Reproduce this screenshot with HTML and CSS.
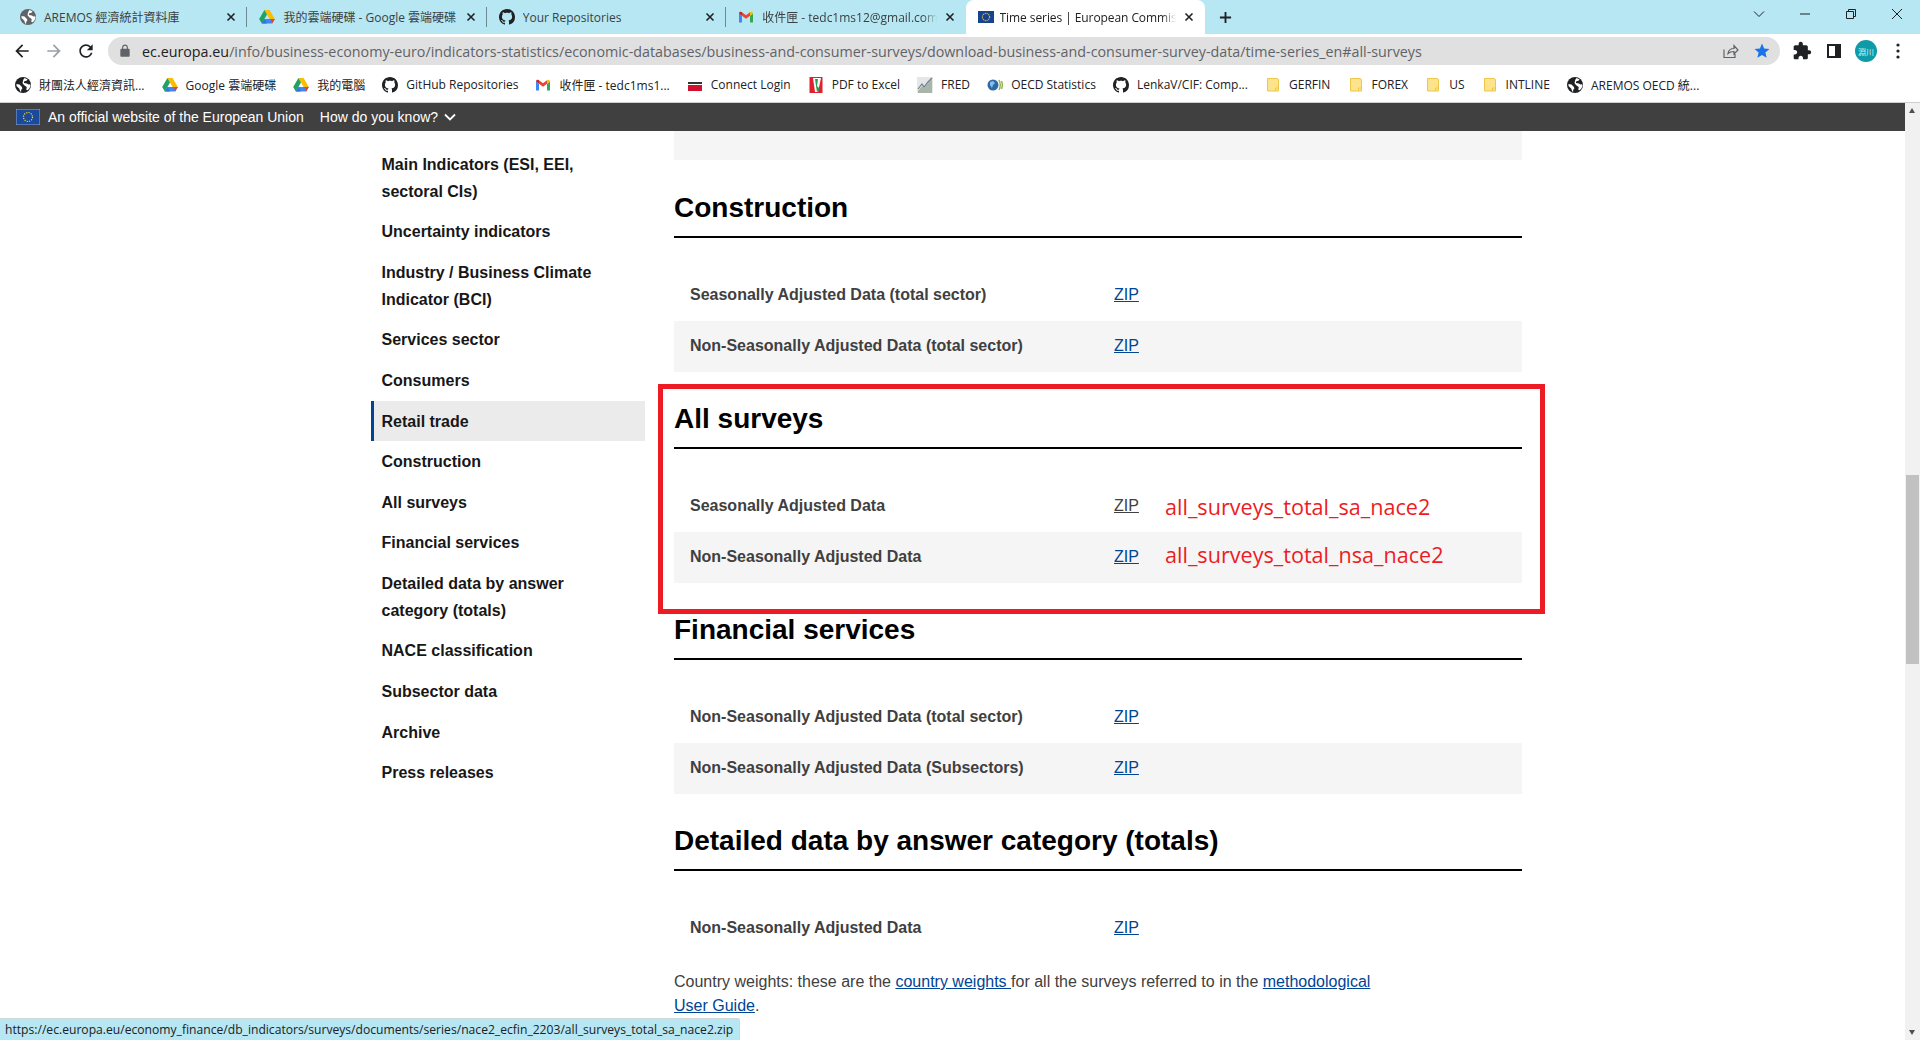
FILE: index.html
```html
<!DOCTYPE html>
<html lang="en">
<head>
<meta charset="utf-8">
<title>Time series | European Commission</title>
<link rel="stylesheet" href="styles.css">
</head>
<body>
<svg class="defs" aria-hidden="true">
  <symbol id="globe" viewBox="0 0 16 16"><circle cx="8" cy="8" r="8" fill="currentColor"/><path d="M1.500 7l3 .5 2.500 2.500.3 1.800-1 .8-.2 2.100-.9-.3-1-3-2.700-2.400zM9.500 1l3 1.200-1 1.600-2.200.5-.4 1.700 3 .4 1.500 1.200 1.800-.3.300 1.600-1.300 2.800-1.600 1.500-1.300-.3.400-3-2.800-1.800-1.400-2 .8-3.300z" fill="#fff"/></symbol>
  <symbol id="drive" viewBox="0 0 16 16"><path d="M5.400 1h5.200l5.200 9h-5.200z" fill="#fbbc04"/><path d="M5.400 1L.2 10l2.600 4.600L8 5.600z" fill="#1ea362"/><path d="M5.400 10h10.400l-2.600 4.600H2.800z" fill="#4285f4"/><path d="M5.400 10l-2.600 4.600h5.200z" fill="#3573d8"/><path d="M13.200 14.600l2.600-4.600h-4z" fill="#ea4335"/></symbol>
  <symbol id="github" viewBox="0 0 16 16"><path fill="currentColor" d="M8 0C3.580 0 0 3.580 0 8c0 3.540 2.290 6.530 5.470 7.590.4.070.55-.17.55-.38 0-.19-.01-.82-.01-1.490-2.010.37-2.530-.49-2.690-.94-.09-.23-.48-.94-.82-1.130-.28-.15-.68-.52-.01-.53.63-.01 1.080.58 1.230.82.72 1.210 1.870.87 2.330.66.07-.52.28-.87.51-1.070-1.780-.2-3.640-.89-3.640-3.950 0-.87.31-1.590.82-2.150-.08-.2-.36-1.020.08-2.120 0 0 .67-.21 2.200.82.64-.18 1.320-.27 2-.27s1.360.09 2 .27c1.530-1.040 2.200-.82 2.200-.82.44 1.100.16 1.920.08 2.120.51.56.82 1.270.82 2.150 0 3.070-1.870 3.750-3.650 3.950.29.25.54.73.54 1.480 0 1.070-.01 1.930-.01 2.200 0 .21.15.46.55.38A8.013 8.013 0 0016 8c0-4.420-3.580-8-8-8z"/></symbol>
  <symbol id="gmail" viewBox="0 0 16 16"><path d="M1 13.500V4.400l3 2.300v6.800z" fill="#4285f4"/><path d="M12 13.500V6.700l3-2.300v9.100z" fill="#34a853"/><path d="M4 6.700V3.200L8 6.300l4-3.100v3.500L8 9.800z" fill="#ea4335"/><path d="M1 4.400c0-1.600 1.800-2.300 3-1.200v3.500z" fill="#c5221f"/><path d="M15 4.400c0-1.600-1.800-2.300-3-1.200v3.500z" fill="#fbbc04"/></symbol>
  <symbol id="euflag" viewBox="0 0 16 16"><rect y="2" width="16" height="12" fill="#17428f"/><circle cx="8" cy="8" r="3.600" fill="none" stroke="#c7b93a" stroke-width="1.200" stroke-dasharray="1.200 .7"/></symbol>
  <symbol id="connect" viewBox="0 0 16 16"><rect x="1" y="5" width="14" height="2" fill="#333"/><rect x="1" y="8" width="14" height="6" fill="#d0102c"/></symbol>
  <symbol id="pdf" viewBox="0 0 16 16"><rect x="1.500" width="13" height="16" fill="#e0202c"/><path d="M5 1h8l-3 14H7z" fill="#fff"/><path d="M7 2l3 0-1 7 3 3-3 3-1-6z" fill="#2c9a50"/></symbol>
  <symbol id="fred" viewBox="0 0 16 16"><rect width="16" height="16" fill="#e4e6e8"/><path d="M1 14l4-5 2 2 4-5 4-4v14H1z" fill="#a9b5a8"/><path d="M1 12l4-5 2 3 4-5 4-4" fill="none" stroke="#6b7d8e" stroke-width="1.200"/></symbol>
  <symbol id="oecd" viewBox="0 0 16 16"><circle cx="6" cy="8" r="5.500" fill="#2b6aa8"/><path d="M3 5l3-1 2 2-2 2-1 3-2-3z" fill="#8fbde0"/><path d="M12 3c1.500 3 1.500 7 0 10M14.500 4c1 2.500 1 5.500 0 8" fill="none" stroke="#9ab54a" stroke-width="1.500"/></symbol>
  <symbol id="folder" viewBox="0 0 16 16"><path d="M2.500 1.500h9.500l1.500 1v11.500h-11z" fill="#fde38c" stroke="#eec64a"/><path d="M10.500 14v-3h3" fill="none" stroke="#eec64a"/></symbol>
  <symbol id="close" viewBox="0 0 10 10"><path d="M1.500 1.500l7 7M8.500 1.500l-7 7" stroke="currentColor" stroke-width="1.600" fill="none"/></symbol>
  <symbol id="arrow" viewBox="0 0 24 24"><path fill="currentColor" d="M20 11H7.830l5.590-5.590L12 4l-8 8 8 8 1.410-1.410L7.830 13H20v-2z"/></symbol>
</svg>

<header class="chrome">
  <div class="tabstrip">
    <div class="tab sep"><svg class="fav muted"><use href="#globe"/></svg><span class="title">AREMOS 經濟統計資料庫</span><svg class="x"><use href="#close"/></svg></div>
    <div class="tab sep"><svg class="fav"><use href="#drive"/></svg><span class="title">我的雲端硬碟 - Google 雲端硬碟</span><svg class="x"><use href="#close"/></svg></div>
    <div class="tab sep"><svg class="fav"><use href="#github"/></svg><span class="title">Your Repositories</span><svg class="x"><use href="#close"/></svg></div>
    <div class="tab"><svg class="fav"><use href="#gmail"/></svg><span class="title fade">收件匣 - tedc1ms12@gmail.com</span><svg class="x"><use href="#close"/></svg></div>
    <div class="tab active"><svg class="fav"><use href="#euflag"/></svg><span class="title fade">Time series | European Commission</span><svg class="x"><use href="#close"/></svg></div>
    <svg class="newtab" viewBox="0 0 14 14"><path d="M7 1v12M1 7h12" stroke="currentColor" stroke-width="2" fill="none"/></svg>
    <div class="winctl">
      <svg viewBox="0 0 12 12"><path d="M1 3.500l5 5 5-5" fill="none" stroke="currentColor"/></svg>
      <svg viewBox="0 0 12 12"><path d="M1 6h10" stroke="currentColor" fill="none"/></svg>
      <svg viewBox="0 0 12 12"><path d="M1.500 3.500h7v7h-7zM3.500 3.500v-2h7v7h-2" fill="none" stroke="currentColor"/></svg>
      <svg viewBox="0 0 12 12"><path d="M1 1l10 10M11 1L1 11" fill="none" stroke="currentColor"/></svg>
    </div>
  </div>

  <div class="toolbar">
    <span class="btn"><svg class="ico"><use href="#arrow"/></svg></span>
    <span class="btn dim"><svg class="ico flip"><use href="#arrow"/></svg></span>
    <span class="btn"><svg class="ico" viewBox="0 0 24 24"><path fill="currentColor" d="M17.650 6.350A7.958 7.958 0 0012 4c-4.420 0-7.990 3.580-7.990 8s3.570 8 7.990 8c3.730 0 6.840-2.550 7.730-6h-2.080A5.990 5.990 0 0112 18c-3.310 0-6-2.690-6-6s2.690-6 6-6c1.660 0 3.140.690 4.220 1.780L13 11h7V4l-2.350 2.350z"/></svg></span>
    <div class="omnibox">
      <svg class="lock" viewBox="0 0 24 24"><path fill="currentColor" d="M18 8h-1V6c0-2.760-2.240-5-5-5S7 3.240 7 6v2H6c-1.100 0-2 .9-2 2v10c0 1.100.9 2 2 2h12c1.100 0 2-.9 2-2V10c0-1.100-.9-2-2-2zM9 6c0-1.660 1.340-3 3-3s3 1.340 3 3v2H9V6z"/></svg>
      <span class="url"><b>ec.europa.eu</b>/info/business-economy-euro/indicators-statistics/economic-databases/business-and-consumer-surveys/download-business-and-consumer-survey-data/time-series_en#all-surveys</span>
      <svg class="share" viewBox="0 0 18 18"><path d="M3 7.500V15.500h11V12M7 11.500c.5-3.500 3-5 6-5V3.500l4 4.500-4 4V9.500c-2.500 0-4.500.5-6 2z" fill="none" stroke="#5f6368" stroke-width="1.200"/></svg>
      <svg class="star" viewBox="0 0 24 24"><path fill="#1a73e8" d="M12 17.270L18.180 21l-1.640-7.030L22 9.240l-7.190-.61L12 2 9.190 8.630 2 9.240l5.460 4.730L5.820 21z"/></svg>
    </div>
    <span class="btn"><svg class="ico" viewBox="0 0 24 24"><path fill="currentColor" d="M20.500 11H19V7c0-1.100-.9-2-2-2h-4V3.500C13 2.120 11.880 1 10.500 1S8 2.120 8 3.500V5H4c-1.100 0-1.990.9-1.990 2v3.800H3.500c1.490 0 2.700 1.210 2.700 2.700s-1.210 2.700-2.700 2.700H2V20c0 1.100.9 2 2 2h3.800v-1.500c0-1.490 1.210-2.700 2.700-2.700 1.490 0 2.700 1.210 2.700 2.700V22H17c1.100 0 2-.9 2-2v-4h1.500c1.380 0 2.500-1.120 2.500-2.500S21.880 11 20.500 11z"/></svg></span>
    <span class="btn"><svg class="panel" viewBox="0 0 14 14"><path d="M0 0h14v14H0z" fill="#202124"/><path d="M2 2h6v10H2z" fill="#fff"/></svg></span>
    <span class="btn"><span class="avatar">淵川</span></span>
    <span class="btn"><svg class="dots" viewBox="0 0 4 16"><circle cx="2" cy="2" r="1.600"/><circle cx="2" cy="8" r="1.600"/><circle cx="2" cy="14" r="1.600"/></svg></span>
  </div>

  <div class="bookmarks">
    <span class="bm"><svg><use href="#globe"/></svg>財團法人經濟資訊...</span>
    <span class="bm"><svg><use href="#drive"/></svg>Google 雲端硬碟</span>
    <span class="bm"><svg><use href="#drive"/></svg>我的電腦</span>
    <span class="bm"><svg><use href="#github"/></svg>GitHub Repositories</span>
    <span class="bm"><svg><use href="#gmail"/></svg>收件匣 - tedc1ms1...</span>
    <span class="bm"><svg><use href="#connect"/></svg>Connect Login</span>
    <span class="bm"><svg><use href="#pdf"/></svg>PDF to Excel</span>
    <span class="bm"><svg><use href="#fred"/></svg>FRED</span>
    <span class="bm"><svg><use href="#oecd"/></svg>OECD Statistics</span>
    <span class="bm"><svg><use href="#github"/></svg>LenkaV/CIF: Comp...</span>
    <span class="bm"><svg><use href="#folder"/></svg>GERFIN</span>
    <span class="bm"><svg><use href="#folder"/></svg>FOREX</span>
    <span class="bm"><svg><use href="#folder"/></svg>US</span>
    <span class="bm"><svg><use href="#folder"/></svg>INTLINE</span>
    <span class="bm"><svg><use href="#globe"/></svg>AREMOS OECD 統...</span>
  </div>
</header>

<div class="viewport">
  <div class="eubar">
    <svg class="eu-flag" viewBox="0 0 24 16"><rect width="24" height="16" fill="#1b4a9c" stroke="#8fa6cf"/><circle cx="12" cy="8" r="4.500" fill="none" stroke="#f5d90a" stroke-width="1.200" stroke-dasharray="1.200 1.150"/></svg>
    <span>An official website of the European Union</span>
    <span class="know">How do you know?</span>
    <svg class="chev" viewBox="0 0 12 8"><path d="M1 1.500l5 5 5-5" fill="none" stroke="#fff" stroke-width="1.800"/></svg>
  </div>

  <main class="page">
    <nav class="side">
      <a>Main Indicators (ESI, EEI, sectoral CIs)</a>
      <a>Uncertainty indicators</a>
      <a>Industry / Business Climate Indicator (BCI)</a>
      <a>Services sector</a>
      <a>Consumers</a>
      <a class="current">Retail trade</a>
      <a>Construction</a>
      <a>All surveys</a>
      <a>Financial services</a>
      <a>Detailed data by answer category (totals)</a>
      <a>NACE classification</a>
      <a>Subsector data</a>
      <a>Archive</a>
      <a>Press releases</a>
    </nav>

    <article class="content">
      <div class="strip"></div>
      <section>
        <h2>Construction</h2>
        <div class="rows">
          <div class="row"><strong>Seasonally Adjusted Data (total sector)</strong><a href="#">ZIP</a></div>
          <div class="row"><strong>Non-Seasonally Adjusted Data (total sector)</strong><a href="#">ZIP</a></div>
        </div>
      </section>
      <section>
        <h2>All surveys</h2>
        <div class="rows">
          <div class="row"><strong>Seasonally Adjusted Data</strong><a href="#" class="hover">ZIP</a></div>
          <div class="row"><strong>Non-Seasonally Adjusted Data</strong><a href="#">ZIP</a></div>
        </div>
      </section>
      <section>
        <h2>Financial services</h2>
        <div class="rows">
          <div class="row"><strong>Non-Seasonally Adjusted Data (total sector)</strong><a href="#">ZIP</a></div>
          <div class="row"><strong>Non-Seasonally Adjusted Data (Subsectors)</strong><a href="#">ZIP</a></div>
        </div>
      </section>
      <section>
        <h2>Detailed data by answer category (totals)</h2>
        <div class="rows">
          <div class="row"><strong>Non-Seasonally Adjusted Data</strong><a href="#">ZIP</a></div>
        </div>
      </section>
      <p class="note">Country weights: these are the <a href="#">country weights </a>for all the surveys referred to in the <a href="#">methodological User Guide</a>.</p>
    </article>

    <div class="scrollbar">
      <span class="arrow up"></span>
      <span class="thumb"></span>
      <span class="arrow down"></span>
    </div>
  </main>

  <div class="redbox"></div>
  <span class="mark mark-a">all_surveys_total_sa_nace2</span>
  <span class="mark mark-b">all_surveys_total_nsa_nace2</span>
  <div class="status">https://ec.europa.eu/economy_finance/db_indicators/surveys/documents/series/nace2_ecfin_2203/all_surveys_total_sa_nace2.zip</div>
</div>
</body>
</html>
```

FILE: styles.css
```css
* { box-sizing: border-box; }
html, body { margin: 0; height: 100%; overflow: hidden; background: #fff; }
body { display: flex; flex-direction: column; font-family: "Liberation Sans", Arial, sans-serif; color: #404040; }
.defs { position: absolute; width: 0; height: 0; }

.chrome { flex: none; font-family: "Open Sans", "Noto Sans CJK TC", sans-serif; font-size: 12px; color: #3c4043; }
.tabstrip { display: flex; align-items: center; height: 34px; padding-left: 8px; background: #b6e7f3; }
.tab { position: relative; display: flex; align-items: center; width: 239.4px; height: 34px; padding: 0 11px 0 12px; }
.tab.sep::after { content: ""; position: absolute; right: 0; top: 7px; height: 20px; border-right: 1px solid #6d8a92; }
.tab.active { background: #fff; border-radius: 8px 8px 0 0; color: #202124; }
.fav { flex: none; width: 16px; height: 16px; margin-right: 8px; color: #202124; }
.fav.muted { color: #5f6368; }
.active .fav { margin-right: 6px; }
.title { flex: 1; overflow: hidden; white-space: nowrap; }
.title.fade { -webkit-mask-image: linear-gradient(90deg, #000 92%, transparent); mask-image: linear-gradient(90deg, #000 92%, transparent); }
.active .title { letter-spacing: -.08px; }
.x { flex: none; width: 10px; height: 10px; margin-left: 8px; color: #202124; }
.newtab { flex: none; width: 13px; height: 13px; margin-left: 14px; color: #202124; }
.winctl { display: flex; align-items: center; gap: 34px; margin-left: auto; margin-right: 17px; margin-top: -6px; color: #202124; }
.winctl svg { width: 12px; height: 12px; display: block; }

.toolbar { display: flex; align-items: center; height: 34px; padding: 0 6px; background: #fff; color: #202124; }
.btn { flex: none; display: flex; align-items: center; justify-content: center; width: 32px; height: 34px; }
.btn.dim { color: #9aa0a6; }
.ico { width: 20px; height: 20px; }
.flip { transform: scaleX(-1); }
.panel { width: 14px; height: 14px; }
.dots { width: 4px; height: 16px; fill: #202124; }
.avatar { display: flex; align-items: center; justify-content: center; width: 22px; height: 22px; border-radius: 50%; background: #0f9aa8; color: #d6f2f4; font-size: 8px; }
.omnibox { flex: 1; display: flex; align-items: center; height: 28px; margin: 0 6px; padding: 0 6px 0 10px; background: #e0e0e0; border-radius: 14px; color: #5f6368; }
.lock { flex: none; width: 14px; height: 14px; margin-right: 10px; }
.url { flex: 1; white-space: nowrap; overflow: hidden; font-size: 14.3px; }
.url b { font-weight: 400; color: #202124; }
.share { flex: none; width: 18px; height: 18px; margin-right: 14px; }
.star { flex: none; width: 18px; height: 18px; margin-right: 3px; }

.bookmarks { display: flex; align-items: center; gap: 17.1px; height: 35px; padding: 0 0 1px 15px; background: #fff; border-bottom: 1px solid #cfcfcf; color: #202124; white-space: nowrap; }
.bm { display: flex; align-items: center; gap: 8px; }
.bm svg { width: 16px; height: 16px; flex: none; }

.viewport { position: relative; flex: 1; min-height: 0; display: flex; flex-direction: column; }
.eubar { flex: none; display: flex; align-items: center; height: 28px; padding-left: 16px; background: #404040; color: #fff; font-size: 14px; }
.eu-flag { width: 24px; height: 16px; margin-right: 8px; }
.know { margin-left: 16px; }
.chev { width: 12px; height: 8px; margin-left: 6px; }

.page { flex: 1; min-height: 0; display: flex; padding-left: 371px; overflow: hidden; }
.side { flex: none; width: 274px; padding-top: 13px; }
.side a { display: block; padding: 6.7px 30px 6.9px 10.5px; font-size: 16px; font-weight: 700; line-height: 27px; color: #171717; }
.side a.current { background: #ebebeb; border-left: 3px solid #004494; padding-left: 7.5px; }

.content { flex: none; width: 848px; margin-left: 29px; font-size: 16px; line-height: 24px; }
.strip { height: 29px; background: #f5f5f5; }
section { margin-bottom: 27px; }
h2 { margin: 0 0 32px; height: 50px; padding: 2px 0 10px; border-bottom: 2px solid #000; font-size: 28px; font-weight: 700; line-height: 36px; color: #000; }
.strip + section { margin-top: 28px; }
section:nth-of-type(4) { margin-bottom: 16px; }
.row { display: flex; align-items: center; height: 51px; padding: 0 0 2px 16px; }
.row:nth-child(even) { background: #f5f5f5; }
.row strong { flex: none; width: 424px; color: #404040; }
.row a, .note a { color: #004494; text-decoration: underline; }
.row a.hover { color: #404040; }
.note { margin: 0; max-width: 710px; color: #404040; }

.scrollbar { flex: none; position: absolute; right: 0; top: 0; bottom: 0; width: 15px; display: flex; flex-direction: column; background: #f1f1f1; }
.arrow { flex: none; height: 15px; position: relative; }
.arrow::after { content: ""; position: absolute; left: 4px; border-left: 3.5px solid transparent; border-right: 3.5px solid transparent; }
.arrow.up::after { top: 5px; border-bottom: 5px solid #505050; }
.arrow.down { margin-top: auto; }
.arrow.down::after { top: 5px; border-top: 5px solid #505050; }
.thumb { height: 189px; margin: 0 1px; margin-top: 357px; background: #c1c1c1; }

.redbox { position: absolute; left: 658px; top: 281px; width: 887px; height: 230px; border: 5px solid #ed1c24; pointer-events: none; }
.mark { position: absolute; left: 1165px; font-family: "Open Sans", sans-serif; font-size: 21.6px; line-height: 28px; color: #ed1c24; white-space: nowrap; }
.mark-a { top: 390px; }
.mark-b { top: 438px; }
.status { position: absolute; left: 0; bottom: 0; width: 740px; height: 22px; padding: 0 5px; background: #b6e7f3; border-top: 1px solid #cfd8da; border-right: 1px solid #cfd8da; border-radius: 0 3px 0 0; font-family: "Open Sans", sans-serif; font-size: 12.14px; line-height: 21px; color: #202124; white-space: nowrap; overflow: hidden; }
```
